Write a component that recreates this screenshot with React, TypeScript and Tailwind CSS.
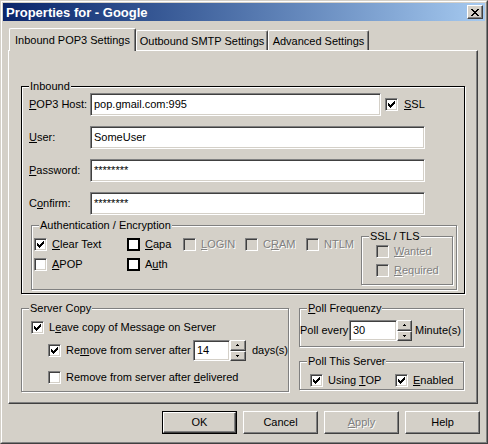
import React from 'react'

const sunken =
  'border border-t-[#808080] border-l-[#808080] border-b-white border-r-white shadow-[inset_1px_1px_0_#404040,inset_-1px_-1px_0_#d4d0c8]'
const raised =
  'border border-t-white border-l-white border-b-[#404040] border-r-[#404040] shadow-[inset_-1px_-1px_0_#808080]'
const dis = 'text-[#808080] [text-shadow:1px_1px_0_#fff]'

function CheckMark() {
  return (
    <svg width="7" height="7" viewBox="0 0 7 7" shapeRendering="crispEdges" fill="#000">
      <rect x="6" y="0" width="1" height="1" />
      <rect x="5" y="1" width="2" height="1" />
      <rect x="0" y="2" width="1" height="1" />
      <rect x="4" y="2" width="3" height="1" />
      <rect x="0" y="3" width="2" height="1" />
      <rect x="3" y="3" width="3" height="1" />
      <rect x="0" y="4" width="5" height="1" />
      <rect x="1" y="5" width="3" height="1" />
      <rect x="2" y="6" width="1" height="1" />
    </svg>
  )
}

function Box({ checked, disabled, bold }: { checked?: boolean; disabled?: boolean; bold?: boolean }) {
  if (bold) return <span className="w-[13px] h-[13px] shrink-0 border-2 border-black bg-white" />
  return (
    <span
      className={`w-[13px] h-[13px] shrink-0 flex items-center justify-center ${sunken} ${
        disabled ? 'bg-[#d4d0c8]' : 'bg-white'
      }`}
    >
      {checked && <CheckMark />}
    </span>
  )
}

function Check({
  children,
  checked,
  disabled,
  bold,
  className = '',
}: {
  children: React.ReactNode
  checked?: boolean
  disabled?: boolean
  bold?: boolean
  className?: string
}) {
  return (
    <div className={`flex items-center gap-[5px] h-[13px] ${className}`}>
      <Box checked={checked} disabled={disabled} bold={bold} />
      <span className={`leading-[13px] whitespace-nowrap ${disabled ? dis : ''}`}>{children}</span>
    </div>
  )
}

function Group({
  label,
  dark,
  className = '',
  children,
}: {
  label: React.ReactNode
  dark?: boolean
  className?: string
  children?: React.ReactNode
}) {
  return (
    <div
      className={`relative shrink-0 border ${
        dark ? 'border-black' : 'border-[#808080]'
      } shadow-[inset_1px_1px_0_#fff,1px_1px_0_#fff] ${className}`}
    >
      <span className="absolute left-[7px] -top-[7px] px-px bg-[#d4d0c8] leading-[13px] whitespace-nowrap">
        {label}
      </span>
      {children}
    </div>
  )
}

function Arrow({ down }: { down?: boolean }) {
  return (
    <svg width="3" height="2" viewBox="0 0 3 2" shapeRendering="crispEdges" fill="#000">
      {down ? (
        <>
          <rect x="0" y="0" width="3" height="1" />
          <rect x="1" y="1" width="1" height="1" />
        </>
      ) : (
        <>
          <rect x="1" y="0" width="1" height="1" />
          <rect x="0" y="1" width="3" height="1" />
        </>
      )}
    </svg>
  )
}

function Spin({ w }: { w: string }) {
  return (
    <div className={`flex flex-col h-[21px] shrink-0 ${w}`}>
      <div className={`${raised} flex-1 flex items-center justify-center`}>
        <Arrow />
      </div>
      <div className={`${raised} flex-1 flex items-center justify-center`}>
        <Arrow down />
      </div>
    </div>
  )
}

function Field({ label, value, w }: { label: React.ReactNode; value: string; w: string }) {
  return (
    <div className="flex items-center h-[23px]">
      <span className="w-[61px] shrink-0">{label}</span>
      <div className={`${sunken} bg-white h-[23px] ${w} flex items-center pl-[3px]`}>{value}</div>
    </div>
  )
}

export default function App() {
  return (
    <div className="w-[488px] h-[444px] bg-[#d4d0c8] font-['Liberation_Sans',Arial,sans-serif] text-[11px] text-black select-none">
      <div className="w-full h-full border border-t-[#d4d0c8] border-l-[#d4d0c8] border-b-[#404040] border-r-[#404040]">
        <div className="w-full h-full border border-t-white border-l-white border-b-[#808080] border-r-[#808080] p-px flex flex-col">
          {/* title bar */}
          <div className="h-[18px] shrink-0 flex items-center justify-between bg-linear-to-r from-[#0a246a] to-[#a6caf0] pl-[3px] pr-[2px]">
            <span className="text-white font-bold text-[13px] leading-none">Properties for - Google</span>
            <div className={`${raised} bg-[#d4d0c8] w-[16px] h-[14px] flex items-center justify-center`}>
              <svg width="8" height="7" viewBox="0 0 8 7" shapeRendering="crispEdges" fill="#000">
                <rect x="0" y="0" width="2" height="1" />
                <rect x="6" y="0" width="2" height="1" />
                <rect x="1" y="1" width="2" height="1" />
                <rect x="5" y="1" width="2" height="1" />
                <rect x="2" y="2" width="4" height="1" />
                <rect x="3" y="3" width="2" height="1" />
                <rect x="2" y="4" width="4" height="1" />
                <rect x="1" y="5" width="2" height="1" />
                <rect x="5" y="5" width="2" height="1" />
                <rect x="0" y="6" width="2" height="1" />
                <rect x="6" y="6" width="2" height="1" />
              </svg>
            </div>
          </div>

          {/* tabs */}
          <div className="mt-[7px] ml-[5px] h-[22px] flex items-end shrink-0">
            <div className="ml-px w-[127px] h-[23px] -mb-px relative z-10 bg-[#d4d0c8] border-l border-t border-white border-r border-r-[#404040] rounded-t-[2px] shadow-[inset_-1px_0_0_#808080] flex items-center justify-center">
              Inbound POP3 Settings
            </div>
            <div className="w-[132px] h-[20px] border-l border-t border-white border-r border-r-[#404040] rounded-t-[2px] shadow-[inset_-1px_0_0_#808080] flex items-center justify-center pt-px">
              Outbound SMTP Settings
            </div>
            <div className="w-[101px] h-[20px] border-l border-t border-white border-r border-r-[#404040] rounded-t-[2px] shadow-[inset_-1px_0_0_#808080] flex items-center justify-center pt-px">
              Advanced Settings
            </div>
          </div>

          {/* tab panel */}
          <div className="ml-[5px] w-[470px] h-[354px] shrink-0 border border-t-white border-l-white border-b-[#404040] border-r-[#404040] shadow-[inset_-1px_-1px_0_#808080] pl-[12px] pt-[35px]">
            <Group label="Inbound" dark className="w-[444px] h-[208px] pt-[6px] pl-[7px]">
              <div className="flex flex-col gap-[10px]">
                <div className="flex items-center h-[23px]">
                  <span className="w-[61px] shrink-0">
                    <u>P</u>OP3 Host:
                  </span>
                  <div className={`${sunken} bg-white h-[23px] w-[291px] flex items-center pl-[3px]`}>
                    pop.gmail.com:995
                  </div>
                  <Check checked className="ml-[4px] gap-[6px]">
                    <u>S</u>SL
                  </Check>
                </div>
                <Field label={<><u>U</u>ser:</>} value="SomeUser" w="w-[335px]" />
                <Field label={<><u>P</u>assword:</>} value="********" w="w-[335px]" />
                <Field label={<>C<u>o</u>nfirm:</>} value="********" w="w-[335px]" />

                <Group label="Authentication / Encryption" className="ml-[2px] w-[426px] h-[65px] pl-[2px] flex">
                  <div className="mt-[12px] w-[327px] shrink-0 flex flex-col gap-[7px]">
                    <div className="flex">
                      <Check checked className="w-[93px]">
                        <u>C</u>lear Text
                      </Check>
                      <Check bold className="w-[56px]">
                        <u>C</u>apa
                      </Check>
                      <Check disabled className="w-[62px]">
                        <u>L</u>OGIN
                      </Check>
                      <Check disabled className="w-[61px]">
                        C<u>R</u>AM
                      </Check>
                      <Check disabled>NTLM</Check>
                    </div>
                    <div className="flex">
                      <Check className="w-[93px]">
                        <u>A</u>POP
                      </Check>
                      <Check bold>
                        A<u>u</u>th
                      </Check>
                    </div>
                  </div>
                  <Group label="SSL / TLS" className="mt-[10px] w-[92px] h-[49px] pl-[14px] pt-[8px] flex flex-col gap-[6px]">
                    <Check disabled>
                      <u>W</u>anted
                    </Check>
                    <Check disabled>
                      <u>R</u>equired
                    </Check>
                  </Group>
                </Group>
              </div>
            </Group>

            <div className="mt-[14px] flex gap-[10px]">
              <Group label="Server Copy" className="w-[268px] h-[84px] pl-[9px] pt-[12px] flex flex-col">
                <Check checked>
                  L<u>e</u>ave copy of Message on Server
                </Check>
                <div className="mt-[6px] h-[21px] flex items-center pl-[17px]">
                  <Box checked />
                  <span className="ml-[5px] w-[127px] shrink-0">
                    Re<u>m</u>ove from server after
                  </span>
                  <div className={`${sunken} bg-white w-[40px] h-[21px] flex items-center pl-[3px]`}>14</div>
                  <Spin w="w-[16px]" />
                  <span className="ml-[6px]">days(s)</span>
                </div>
                <Check className="mt-[10px] ml-[17px]">
                  Remove from server after <u>d</u>elivered
                </Check>
              </Group>

              <div className="flex flex-col">
                <Group label={<><u>P</u>oll Frequenzy</>} className="w-[165px] h-[39px] pt-[11px] flex items-start">
                  <div className="flex items-center h-[21px]">
                    <span className="w-[49px] shrink-0">Poll every</span>
                    <div className={`${sunken} bg-white w-[48px] h-[21px] flex items-center pl-[3px]`}>30</div>
                    <Spin w="w-[15px]" />
                    <span className="ml-[3px]">Minute(s)</span>
                  </div>
                </Group>
                <Group label="Poll This Server" className="mt-[14px] w-[165px] h-[29px] pl-[10px] pt-[12px] flex">
                  <Check checked className="w-[85px]">
                    Using <u>T</u>OP
                  </Check>
                  <Check checked>
                    <u>E</u>nabled
                  </Check>
                </Group>
              </div>
            </div>
          </div>

          {/* buttons */}
          <div className="mt-[7px] flex justify-end gap-[6px] pr-[5px]">
            <div className="w-[75px] h-[23px] border border-black">
              <div className={`${raised} w-full h-full flex items-center justify-center`}>OK</div>
            </div>
            <div className={`${raised} w-[75px] h-[23px] flex items-center justify-center`}>Cancel</div>
            <div className={`${raised} w-[75px] h-[23px] flex items-center justify-center`}>
              <span className={dis}>
                <u>A</u>pply
              </span>
            </div>
            <div className={`${raised} w-[75px] h-[23px] flex items-center justify-center`}>Help</div>
          </div>
        </div>
      </div>
    </div>
  )
}
